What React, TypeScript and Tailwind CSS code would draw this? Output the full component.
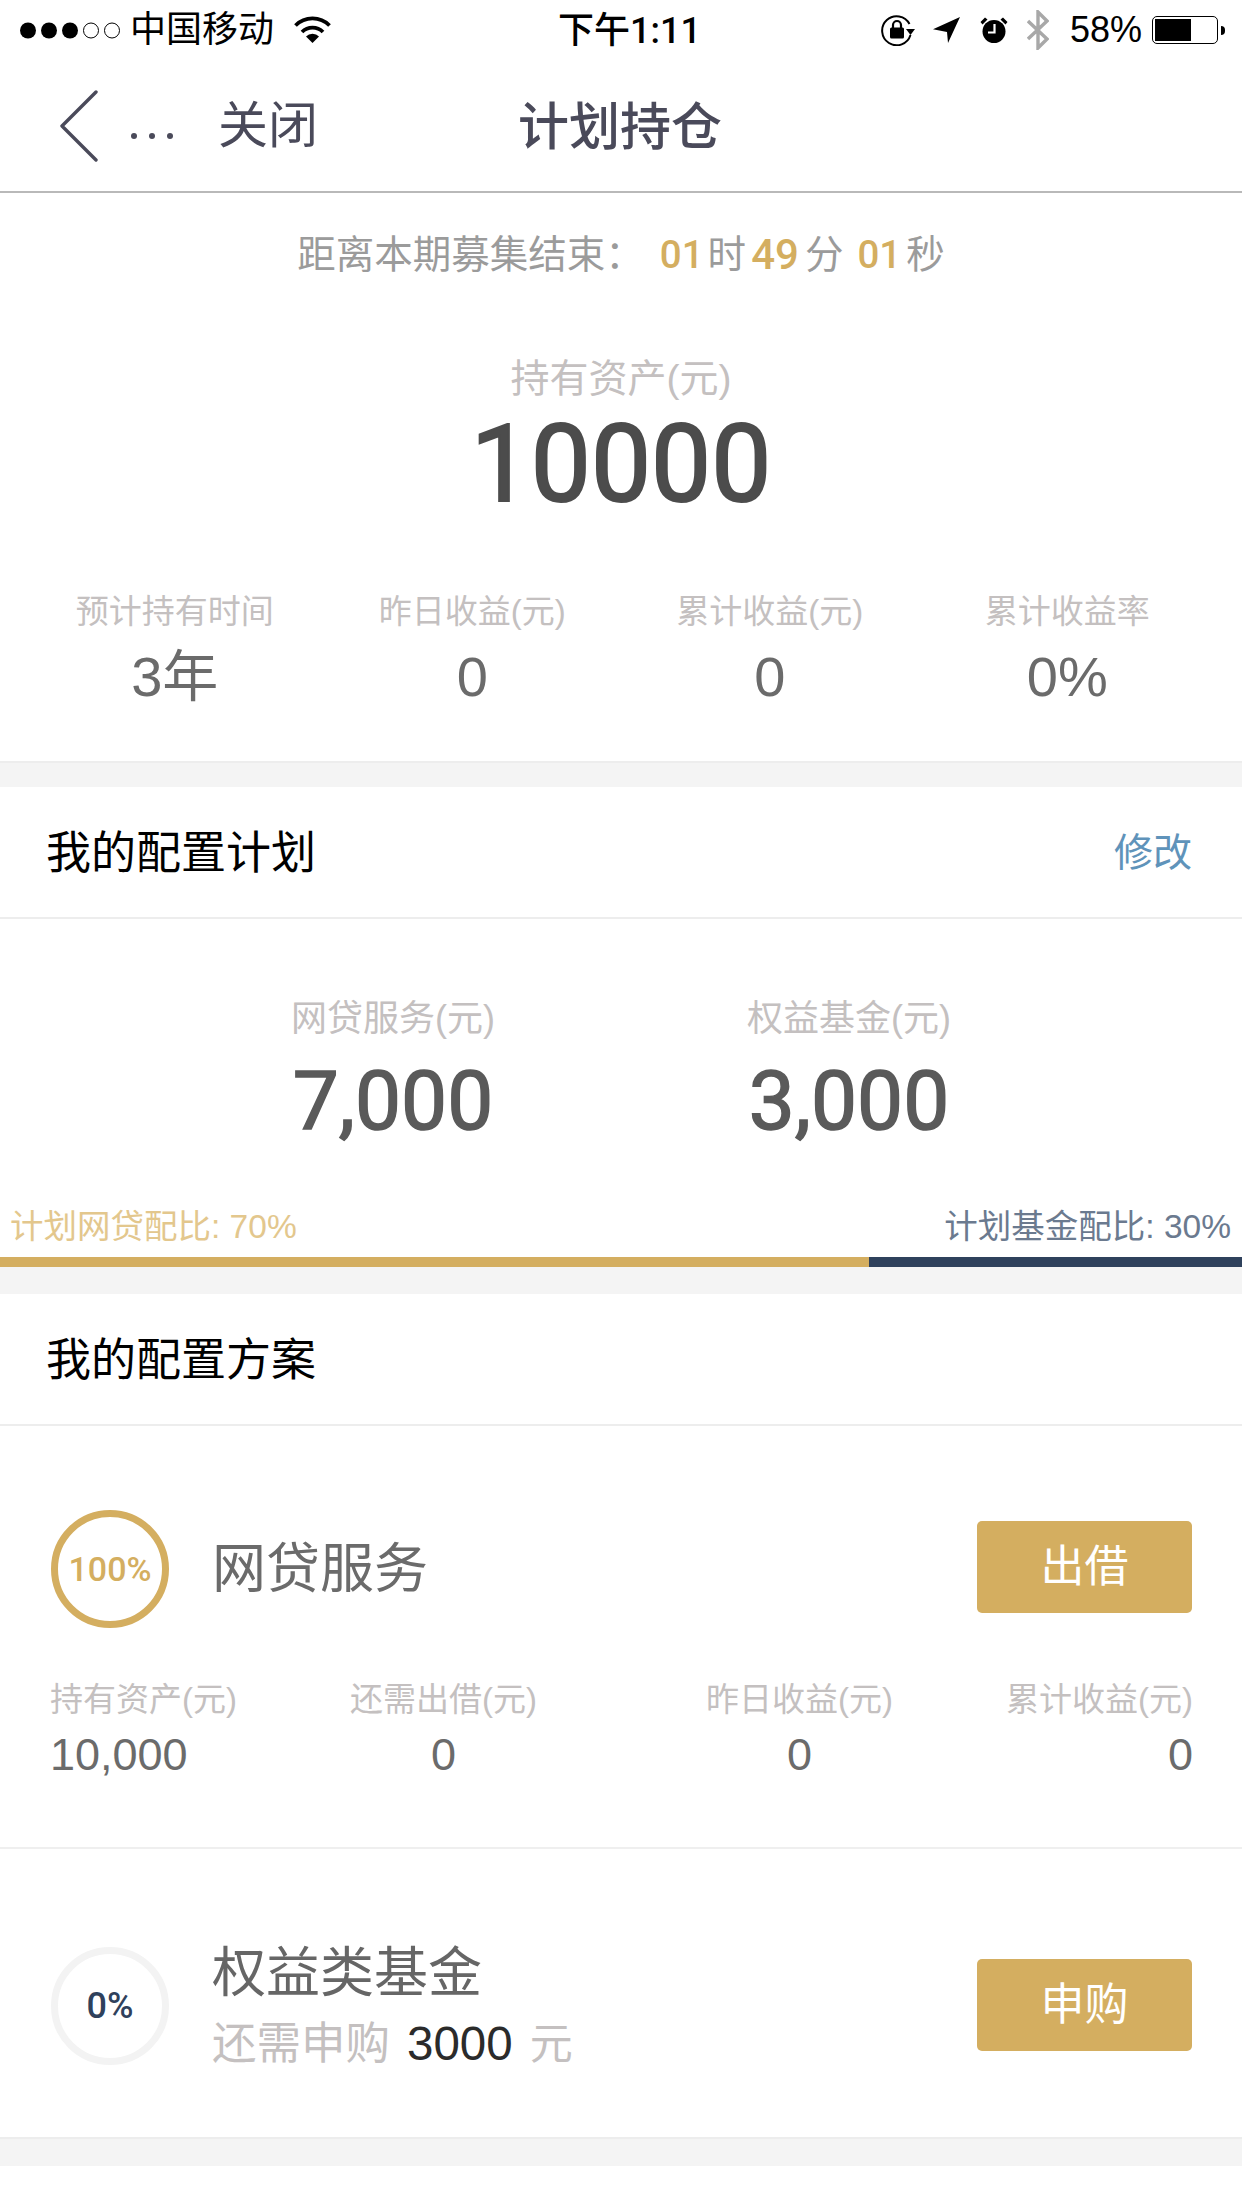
import React from 'react'

const numFont = "font-['Roboto','Noto_Sans_CJK_SC',sans-serif]"

function StatusBar() {
  return (
    <div className="h-[60px] flex items-center justify-between pl-[20px] pr-[17px] text-black text-[36px] leading-none relative">
      <div className="flex items-center">
        <svg width="100" height="17" viewBox="0 0 100 17">
          <circle cx="8" cy="8.5" r="8" fill="#000" />
          <circle cx="29" cy="8.5" r="8" fill="#000" />
          <circle cx="50" cy="8.5" r="8" fill="#000" />
          <circle cx="71" cy="8.5" r="7.5" fill="none" stroke="#000" strokeWidth="1" />
          <circle cx="92" cy="8.5" r="7.5" fill="none" stroke="#000" strokeWidth="1" />
        </svg>
        <span className="ml-[10px]">中国移动</span>
        <svg className="ml-[20px] mb-[1px]" width="37" height="27" viewBox="0 0 37 27">
          <path d="M1.5 9.5 A24 24 0 0 1 35.5 9.5" fill="none" stroke="#000" strokeWidth="3.8" />
          <path d="M8 16 A15 15 0 0 1 29 16" fill="none" stroke="#000" strokeWidth="3.8" />
          <path d="M12 20.5 A9 9 0 0 1 25 20.5 L18.5 27 Z" fill="#000" />
        </svg>
      </div>
      <span className={`absolute left-[558px] top-[13px] text-[36px] font-medium ${numFont}`}>下午1:11</span>
      <div className="flex items-center">
        <svg width="34" height="32" viewBox="0 0 34 32">
          <path d="M29.5 21 A14.5 14.5 0 1 1 28.5 10" fill="none" stroke="#000" strokeWidth="2" />
          <path d="M25 15 L34 15 L29.5 21 Z" fill="#000" />
          <rect x="9" y="13.5" width="14" height="11" rx="1.5" fill="#000" />
          <path d="M12 14 V11 A4 4 0 0 1 20 11 V14" fill="none" stroke="#000" strokeWidth="2.2" />
        </svg>
        <svg className="ml-[18px]" width="27" height="26" viewBox="0 0 27 26">
          <path d="M0 12.3 L27 0 L15 26 L14 15 Z" fill="#000" />
        </svg>
        <svg className="ml-[20px]" width="28" height="26" viewBox="0 0 28 26">
          <circle cx="14" cy="14.5" r="11.5" fill="#000" />
          <path d="M0.5 5 L5 0.5 L7.5 2.5 L2.5 7.5 Z M27.5 5 L23 0.5 L20.5 2.5 L25.5 7.5 Z" fill="#000" />
          <path d="M14.5 7 V15.5 H8" fill="none" stroke="#fff" strokeWidth="2.2" />
        </svg>
        <svg className="ml-[19px]" width="22" height="40" viewBox="0 0 22 40">
          <path d="M1 11 L20 29 L11 38 V2 L20 11 L1 29" fill="none" stroke="#a8a8a8" strokeWidth="3.4" />
        </svg>
        <span className="ml-[21px]">58%</span>
        <div className="ml-[10px] w-[66px] h-[28px] border border-black rounded-[5px] p-[2px]">
          <div className="w-[60%] h-full bg-black" />
        </div>
        <div className="ml-[3px] w-[4px] h-[9px] bg-black rounded-r-full" />
      </div>
    </div>
  )
}

function NavBar() {
  return (
    <div className="h-[133px] border-b-2 border-[#b9b9b9] relative flex items-center pl-[60px] text-[#4a4a5a]">
      <svg width="40" height="72" viewBox="0 0 40 72">
        <path d="M36 2 L2 36 L36 70" fill="none" stroke="#4a4a5a" strokeWidth="3.4" strokeLinecap="round" strokeLinejoin="round" />
      </svg>
      <div className="ml-[31px] flex gap-[12px] mt-[20px]">
        <span className="w-[6px] h-[6px] rounded-full bg-[#4a4a5a]" />
        <span className="w-[6px] h-[6px] rounded-full bg-[#4a4a5a]" />
        <span className="w-[6px] h-[6px] rounded-full bg-[#4a4a5a]" />
      </div>
      <span className="ml-[45px] text-[50px] leading-none">关闭</span>
      <span className="absolute left-[518px] top-[42px] text-[51px] leading-none font-medium">计划持仓</span>
    </div>
  )
}

function Stat({ label, value }: { label: string; value: string }) {
  return (
    <div className="flex flex-col items-center">
      <span className="text-[33px] leading-[40px] text-[#c4c0c0] whitespace-nowrap">{label}</span>
      <span className="text-[56px] leading-[66px] mt-[12px] text-[#6b6b6b]">{value}</span>
    </div>
  )
}

function Summary() {
  return (
    <div className="h-[570px] border-b-2 border-[#ededed] flex flex-col items-center">
      <div className="mt-[36px] h-[52px] flex items-center text-[38.5px] leading-none text-[#9b9b9b]">
        <span>距离本期募集结束：</span>
        <span className={`${numFont} font-medium text-[#d4ae60] ml-[16px]`}>01</span>
        <span className="ml-[4px]">时</span>
        <span className={`${numFont} font-medium text-[42px] text-[#d4ae60] ml-[5px]`}>49</span>
        <span className="ml-[6px]">分</span>
        <span className={`${numFont} font-medium text-[#d4ae60] ml-[14px]`}>01</span>
        <span className="ml-[5px]">秒</span>
      </div>
      <div className="mt-[73px] text-[39px] leading-[50px] text-[#c4c0c0]">持有资产(元)</div>
      <div className={`${numFont} [-webkit-text-stroke:2px_#4c4c4c] text-[107px] leading-[110px] mt-[6px] text-[#4c4c4c]`}>10000</div>
      <div className="mt-[72px] w-full px-[26px] grid grid-cols-4">
        <Stat label="预计持有时间" value="3年" />
        <Stat label="昨日收益(元)" value="0" />
        <Stat label="累计收益(元)" value="0" />
        <Stat label="累计收益率" value="0%" />
      </div>
    </div>
  )
}

function SectionHeader({ title, action }: { title: string; action?: string }) {
  return (
    <div className="h-[132px] border-b-2 border-[#ededed] flex items-center justify-between pl-[46px] pr-[50px]">
      <span className="text-[45px] leading-none text-black mt-[2px]">{title}</span>
      {action && <span className="text-[39px] leading-none text-[#5f93ba]">{action}</span>}
    </div>
  )
}

function Plan() {
  return (
    <>
      <SectionHeader title="我的配置计划" action="修改" />
      <div className="h-[288px] flex justify-center pt-[78px]">
        {[['网贷服务(元)', '7,000'], ['权益基金(元)', '3,000']].map(([label, value]) => (
          <div key={label} className="w-[456px] flex flex-col items-center">
            <span className="text-[36px] leading-[44px] text-[#c4c0c0]">{label}</span>
            <span className={`${numFont} [-webkit-text-stroke:1.5px_#5a5a5a] text-[82px] leading-[90px] mt-[15px] text-[#5a5a5a]`}>{value}</span>
          </div>
        ))}
      </div>
      <div className="flex justify-between pl-[10px] pr-[11px] text-[33.5px] leading-[40px] h-[50px]">
        <span className="text-[#e3c78d]">计划网贷配比: 70%</span>
        <span className="text-[#6b7a8f]">计划基金配比: 30%</span>
      </div>
      <div className="flex h-[10px]">
        <div className="w-[869px] bg-[#d4ae60]" />
        <div className="flex-1 bg-[#2f415c]" />
      </div>
    </>
  )
}

function Ring({ text, className }: { text: string; className: string }) {
  return (
    <div className={`w-[118px] h-[118px] rounded-full border-[7px] flex items-center justify-center leading-none whitespace-nowrap font-medium ${numFont} ${className}`}>
      {text}
    </div>
  )
}

function BuyButton({ text, className }: { text: string; className?: string }) {
  return (
    <div className={`w-[215px] h-[92px] rounded-[5px] bg-[#d4ae60] flex items-center justify-center text-white text-[44px] leading-none ${className ?? ''}`}>
      {text}
    </div>
  )
}

function ProductStat({ label, value, align }: { label: string; value: string; align: string }) {
  return (
    <div className={`flex flex-col justify-self-start ${align}`}>
      <span className="text-[33px] leading-[40px] text-[#c4c0c0] whitespace-nowrap">{label}</span>
      <span className="text-[45px] leading-[54px] mt-[8px] text-[#6b6b6b]">{value}</span>
    </div>
  )
}

function Products() {
  return (
    <>
      <SectionHeader title="我的配置方案" />
      <div className="h-[423px] border-b-2 border-[#efefef] pt-[84px] pl-[50px] pr-[50px]">
        <div className="flex items-center justify-between">
          <div className="flex items-center">
            <div className="ml-[1px]">
              <Ring text="100%" className="border-[#d4ae60] text-[#d4ae60] text-[34px]" />
            </div>
            <span className="ml-[43px] text-[54px] leading-none text-[#6b6b6b]">网贷服务</span>
          </div>
          <BuyButton text="出借" className="mb-[4px]" />
        </div>
        <div className="mt-[52px] grid grid-cols-[300px_356px_300px_186px]">
          <ProductStat label="持有资产(元)" value="10,000" align="items-start" />
          <ProductStat label="还需出借(元)" value="0" align="items-center" />
          <ProductStat label="昨日收益(元)" value="0" align="items-center" />
          <ProductStat label="累计收益(元)" value="0" align="items-end" />
        </div>
      </div>
      <div className="h-[290px] border-b-2 border-[#ededed] px-[50px] pt-[26px] flex items-center justify-between">
        <div className="flex items-center">
          <div className="ml-[1px]">
            <Ring text="0%" className="border-[#f3f3f3] text-[#2f415c] text-[36px]" />
          </div>
          <div className="ml-[43px] flex flex-col">
            <span className="text-[54px] leading-[62px] text-[#666666]">权益类基金</span>
            <div className="flex items-center text-[44.5px] leading-[52px] mt-[14px] text-[#c4c0c0]">
              <span>还需申购</span>
              <span className="text-[47.5px] text-[#2b2b2b] ml-[17px]">3000</span>
              <span className="ml-[17px] text-[43px]">元</span>
            </div>
          </div>
        </div>
        <BuyButton text="申购" className="mb-[2px]" />
      </div>
    </>
  )
}

export default function App() {
  return (
    <div className="w-[1242px] h-[2208px] bg-white overflow-hidden font-['Liberation_Sans','Noto_Sans_CJK_SC',sans-serif]">
      <StatusBar />
      <NavBar />
      <Summary />
      <div className="h-[24px] bg-[#f4f4f4]" />
      <Plan />
      <div className="h-[27px] bg-[#f4f4f4]" />
      <Products />
      <div className="h-[27px] bg-[#f4f4f4]" />
    </div>
  )
}
